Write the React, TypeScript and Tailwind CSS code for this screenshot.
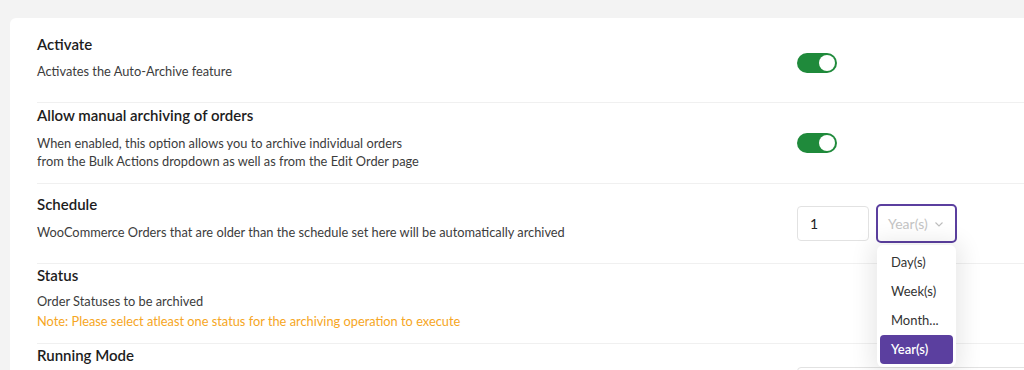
import React from "react";

const font = { fontFamily: "Lato, 'Noto Sans', sans-serif" };

function Toggle() {
  return (
    <div className="w-[40px] h-[20px] rounded-full bg-[#1f8a3b] flex items-center justify-end pr-[2px]">
      <div className="w-[16px] h-[16px] rounded-full bg-white" />
    </div>
  );
}

export default function App() {
  return (
    <div className="h-[370px] w-[1024px] overflow-hidden bg-[#f3f3f3] pt-[18px] pl-[10px]" style={font}>
      <div className="bg-white rounded-tl-[6px] h-full pl-[27px] w-[1100px]">
        {/* Row 1 */}
        <div className="flex items-start border-b border-[#f0f0f0] pt-[16px]">
          <div className="w-[760px] pb-[22px]">
            <div className="text-[15px] leading-[20px] font-semibold text-[#1d1d1d]">Activate</div>
            <div className="mt-[8px] text-[12.8px] leading-[18px] text-[#3c3c3c]">Activates the Auto-Archive feature</div>
          </div>
          <div className="pt-[19px]">
            <Toggle />
          </div>
        </div>
        {/* Row 2 */}
        <div className="flex items-start border-b border-[#f0f0f0] pt-[2px]">
          <div className="w-[760px] pb-[13px]">
            <div className="text-[15px] leading-[20px] font-semibold text-[#1d1d1d]">Allow manual archiving of orders</div>
            <div className="mt-[9px] text-[12.8px] leading-[18px] text-[#3c3c3c]">
              When enabled, this option allows you to archive individual orders
              <br />
              from the Bulk Actions dropdown as well as from the Edit Order page
            </div>
          </div>
          <div className="pt-[28px]">
            <Toggle />
          </div>
        </div>
        {/* Row 3 */}
        <div className="flex items-start border-b border-[#f0f0f0] pt-[10px]">
          <div className="w-[760px] pb-[22px]">
            <div className="text-[15px] leading-[20px] font-semibold text-[#1d1d1d]">Schedule</div>
            <div className="mt-[9px] text-[12.8px] leading-[18px] text-[#3c3c3c]">
              WooCommerce Orders that are older than the schedule set here will be automatically archived
            </div>
          </div>
          <div className="pt-[10px] flex items-center gap-[7px]">
            <div className="w-[72px] h-[35px] border border-[#e2e2e2] rounded-[4px] flex items-center pl-[12px] text-[14px] text-[#222]">
              1
            </div>
            <div className="relative">
              <div className="w-[81px] h-[39px] border-2 border-[#5b3f9f] rounded-[5px] flex items-center pl-[10px] gap-[6px] text-[14px] text-[#c4c4c4]">
                <span>Year(s)</span>
                <svg width="10" height="10" viewBox="0 0 10 10" fill="none" stroke="#bdbdbd" strokeWidth="1.1">
                  <path d="M1.5 3.5 L5 7 L8.5 3.5" />
                </svg>
              </div>
              <div className="absolute left-[1px] top-[41px] w-[79px] h-[122px] bg-white rounded-[6px] shadow-[0_2px_22px_6px_rgba(0,0,0,0.09)] p-[3px] z-10 text-[13px] text-[#333]">
                <div className="h-[29px] flex items-center pl-[11px]">Day(s)</div>
                <div className="h-[29px] flex items-center pl-[11px]">Week(s)</div>
                <div className="h-[29px] flex items-center pl-[11px]">Month...</div>
                <div className="h-[29px] flex items-center pl-[11px] bg-[#5b3f9f] text-white font-semibold rounded-[4px]">Year(s)</div>
              </div>
            </div>
          </div>
        </div>
        {/* Row 4 */}
        <div className="flex border-b border-[#f0f0f0] pt-[1px] pb-[13px]">
          <div className="w-[760px]">
            <div className="text-[15px] leading-[20px] font-semibold text-[#1d1d1d]">Status</div>
            <div className="mt-[7px] text-[12.8px] leading-[18px] text-[#3c3c3c]">Order Statuses to be archived</div>
            <div className="mt-[2px] text-[12.8px] leading-[18px] text-[#f6a623]">
              Note: Please select atleast one status for the archiving operation to execute
            </div>
          </div>
        </div>
        {/* Row 5 */}
        <div className="flex items-start pt-[1px]">
          <div className="w-[760px]">
            <div className="text-[15px] leading-[20px] font-semibold text-[#1d1d1d]">Running Mode</div>
          </div>
          <div className="pt-[22px]">
            <div className="w-[260px] h-[35px] border border-[#e2e2e2] rounded-[4px]" />
          </div>
        </div>
      </div>
    </div>
  );
}
